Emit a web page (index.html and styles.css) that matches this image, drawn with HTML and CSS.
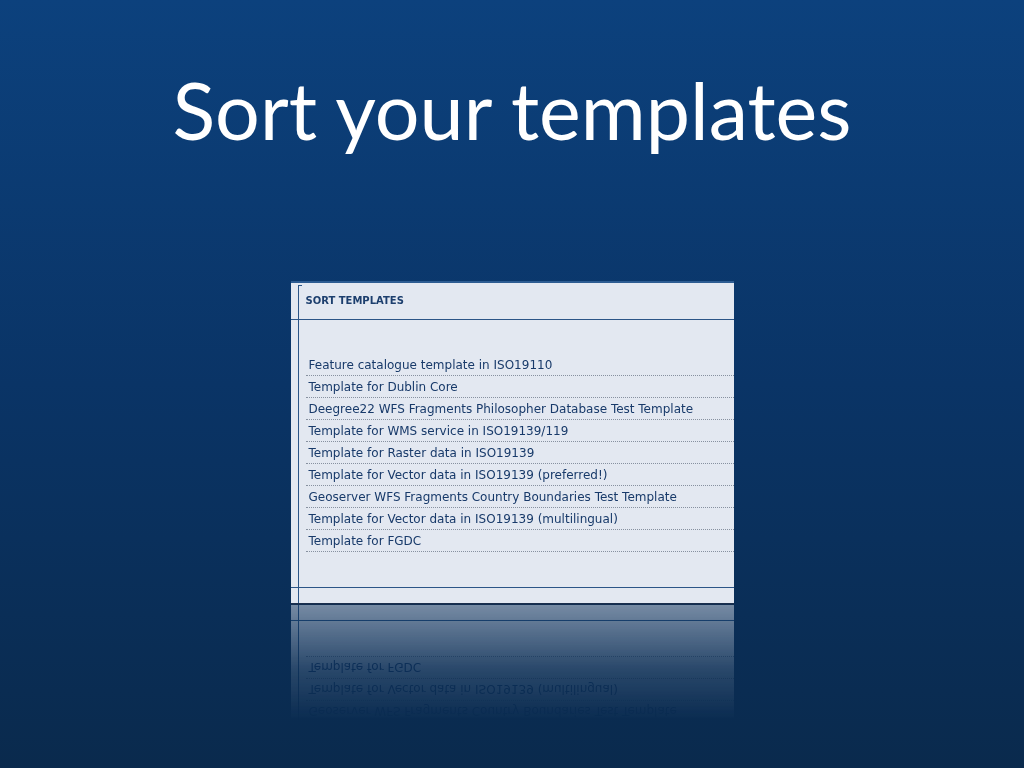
FILE: index.html
```html
<!DOCTYPE html>
<html lang="en">
<head>
  <meta charset="UTF-8">
  <title>Sort your templates</title>
  <link rel="stylesheet" href="styles.css">
</head>
<body>
  <div class="slide">
    <h1>Sort your templates</h1>

    <div class="shot">
      <div class="shot-head">SORT TEMPLATES</div>
      <ul class="templates">
        <li>Feature catalogue template in ISO19110</li>
        <li>Template for Dublin Core</li>
        <li>Deegree22 WFS Fragments Philosopher Database Test Template</li>
        <li>Template for WMS service in ISO19139/119</li>
        <li>Template for Raster data in ISO19139</li>
        <li>Template for Vector data in ISO19139 (preferred!)</li>
        <li>Geoserver WFS Fragments Country Boundaries Test Template</li>
        <li>Template for Vector data in ISO19139 (multilingual)</li>
        <li>Template for FGDC</li>
      </ul>
      <div class="shot-foot"></div>
    </div>
  </div>
</body>
</html>
```

FILE: styles.css
```css
html, body {
  margin: 0;
  height: 100%;
}
body {
  background: linear-gradient(#0c417d, #0a3466 50%, #0a2a4d);
  font-family: "DejaVu Sans", Verdana, sans-serif;
  overflow: hidden;
}
.slide {
  padding-top: 62px;
}
h1 {
  margin: 0;
  color: #fff;
  font-family: Lato, "Open Sans", sans-serif;
  font-weight: 400;
  font-size: 79px;
  line-height: 96px;
  text-align: center;
}

/* screenshot panel */
.shot {
  width: 443px;
  margin: 123px auto 0;
  border-top: 2px solid #2d5c92;
  border-bottom: 1px solid #1b2f4c;
  background:
    linear-gradient(#2b5587, #2b5587) 7px 2px / 1px calc(100% - 2px) no-repeat,
    linear-gradient(#2b5587, #2b5587) 7px 2px / 4px 1px no-repeat,
    #e3e8f1;
  -webkit-box-reflect: below 0 linear-gradient(transparent 64%, rgba(255, 255, 255, 0.15) 80%, rgba(255, 255, 255, 0.5));
}
.shot-head {
  height: 36px;
  line-height: 36px;
  padding-left: 15px;
  border-bottom: 1px solid #2b5587;
  font-size: 10px;
  font-weight: bold;
  color: #1d3f6e;
}
.templates {
  list-style: none;
  margin: 0;
  padding: 34px 0 35px 15px;
  border-bottom: 1px solid #2b5587;
}
.templates li {
  height: 21px;
  line-height: 22px;
  padding-left: 3px;
  border-bottom: 1px dotted #8791a0;
  font-size: 12px;
  color: #183a6a;
  white-space: nowrap;
}
.shot-foot {
  height: 15px;
}
```
